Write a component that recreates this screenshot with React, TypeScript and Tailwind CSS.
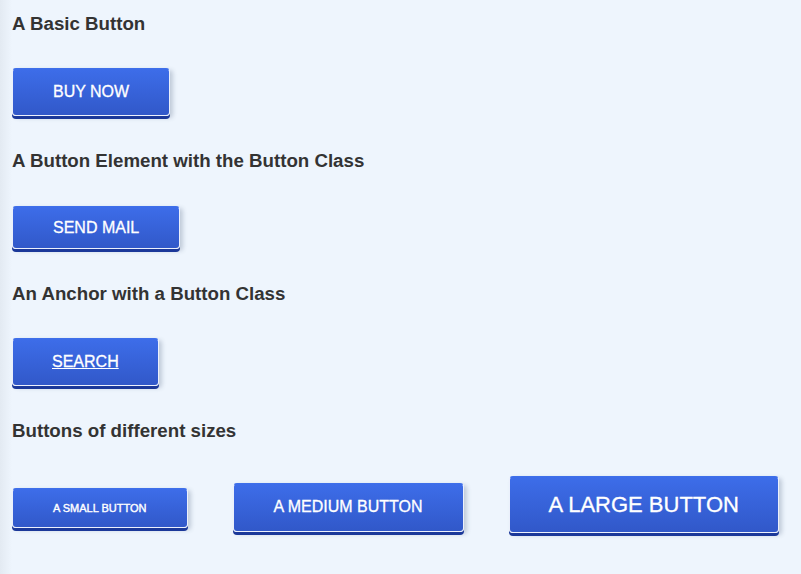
const btn =
  "inline-flex items-center justify-center px-10 rounded-[4px] border border-white/90 border-t-[#3e6fea] bg-[linear-gradient(to_bottom,#3d6de9,#3158c9)] text-white font-['Liberation_Sans',Arial,sans-serif] uppercase [-webkit-text-stroke:0.3px_white] shadow-[0_3px_0_#1b3899,3px_2px_4px_rgba(60,80,110,0.25)]";

function Heading({ children }: { children: React.ReactNode }) {
  return (
    <h3 className="text-[18.7px] leading-[20px] font-bold text-[#333333] font-['Liberation_Sans',Arial,sans-serif]">
      {children}
    </h3>
  );
}

export default function App() {
  return (
    <div className="min-h-[574px] w-full bg-[linear-gradient(to_right,#e3eaf2,#eef5fd_12px)] px-3 pt-[14px]">
      <Heading>A Basic Button</Heading>
      <div className="mt-[34px]">
        <button className={`${btn} h-[48px] text-[16px]`}>Buy Now</button>
      </div>

      <div className="mt-[35px]">
        <Heading>A Button Element with the Button Class</Heading>
      </div>
      <div className="mt-[35px]">
        <button className={`${btn} h-[43px] text-[16px]`}>Send Mail</button>
      </div>

      <div className="mt-[35px]">
        <Heading>An Anchor with a Button Class</Heading>
      </div>
      <div className="mt-[34px]">
        <a href="#" className={`${btn} h-[48px] text-[16px] underline !px-[39px]`}>
          Search
        </a>
      </div>

      <div className="mt-[35px]">
        <Heading>Buttons of different sizes</Heading>
      </div>
      <div className="mt-[35px] flex items-baseline gap-[45px]">
        <button className={`${btn} h-[40px] text-[11px] [-webkit-text-stroke:0.4px_white]`}>A Small Button</button>
        <button className={`${btn} h-[49px] text-[16px]`}>A Medium Button</button>
        <button className={`${btn} h-[57px] text-[22px] !px-[39px]`}>A Large Button</button>
      </div>
    </div>
  );
}
